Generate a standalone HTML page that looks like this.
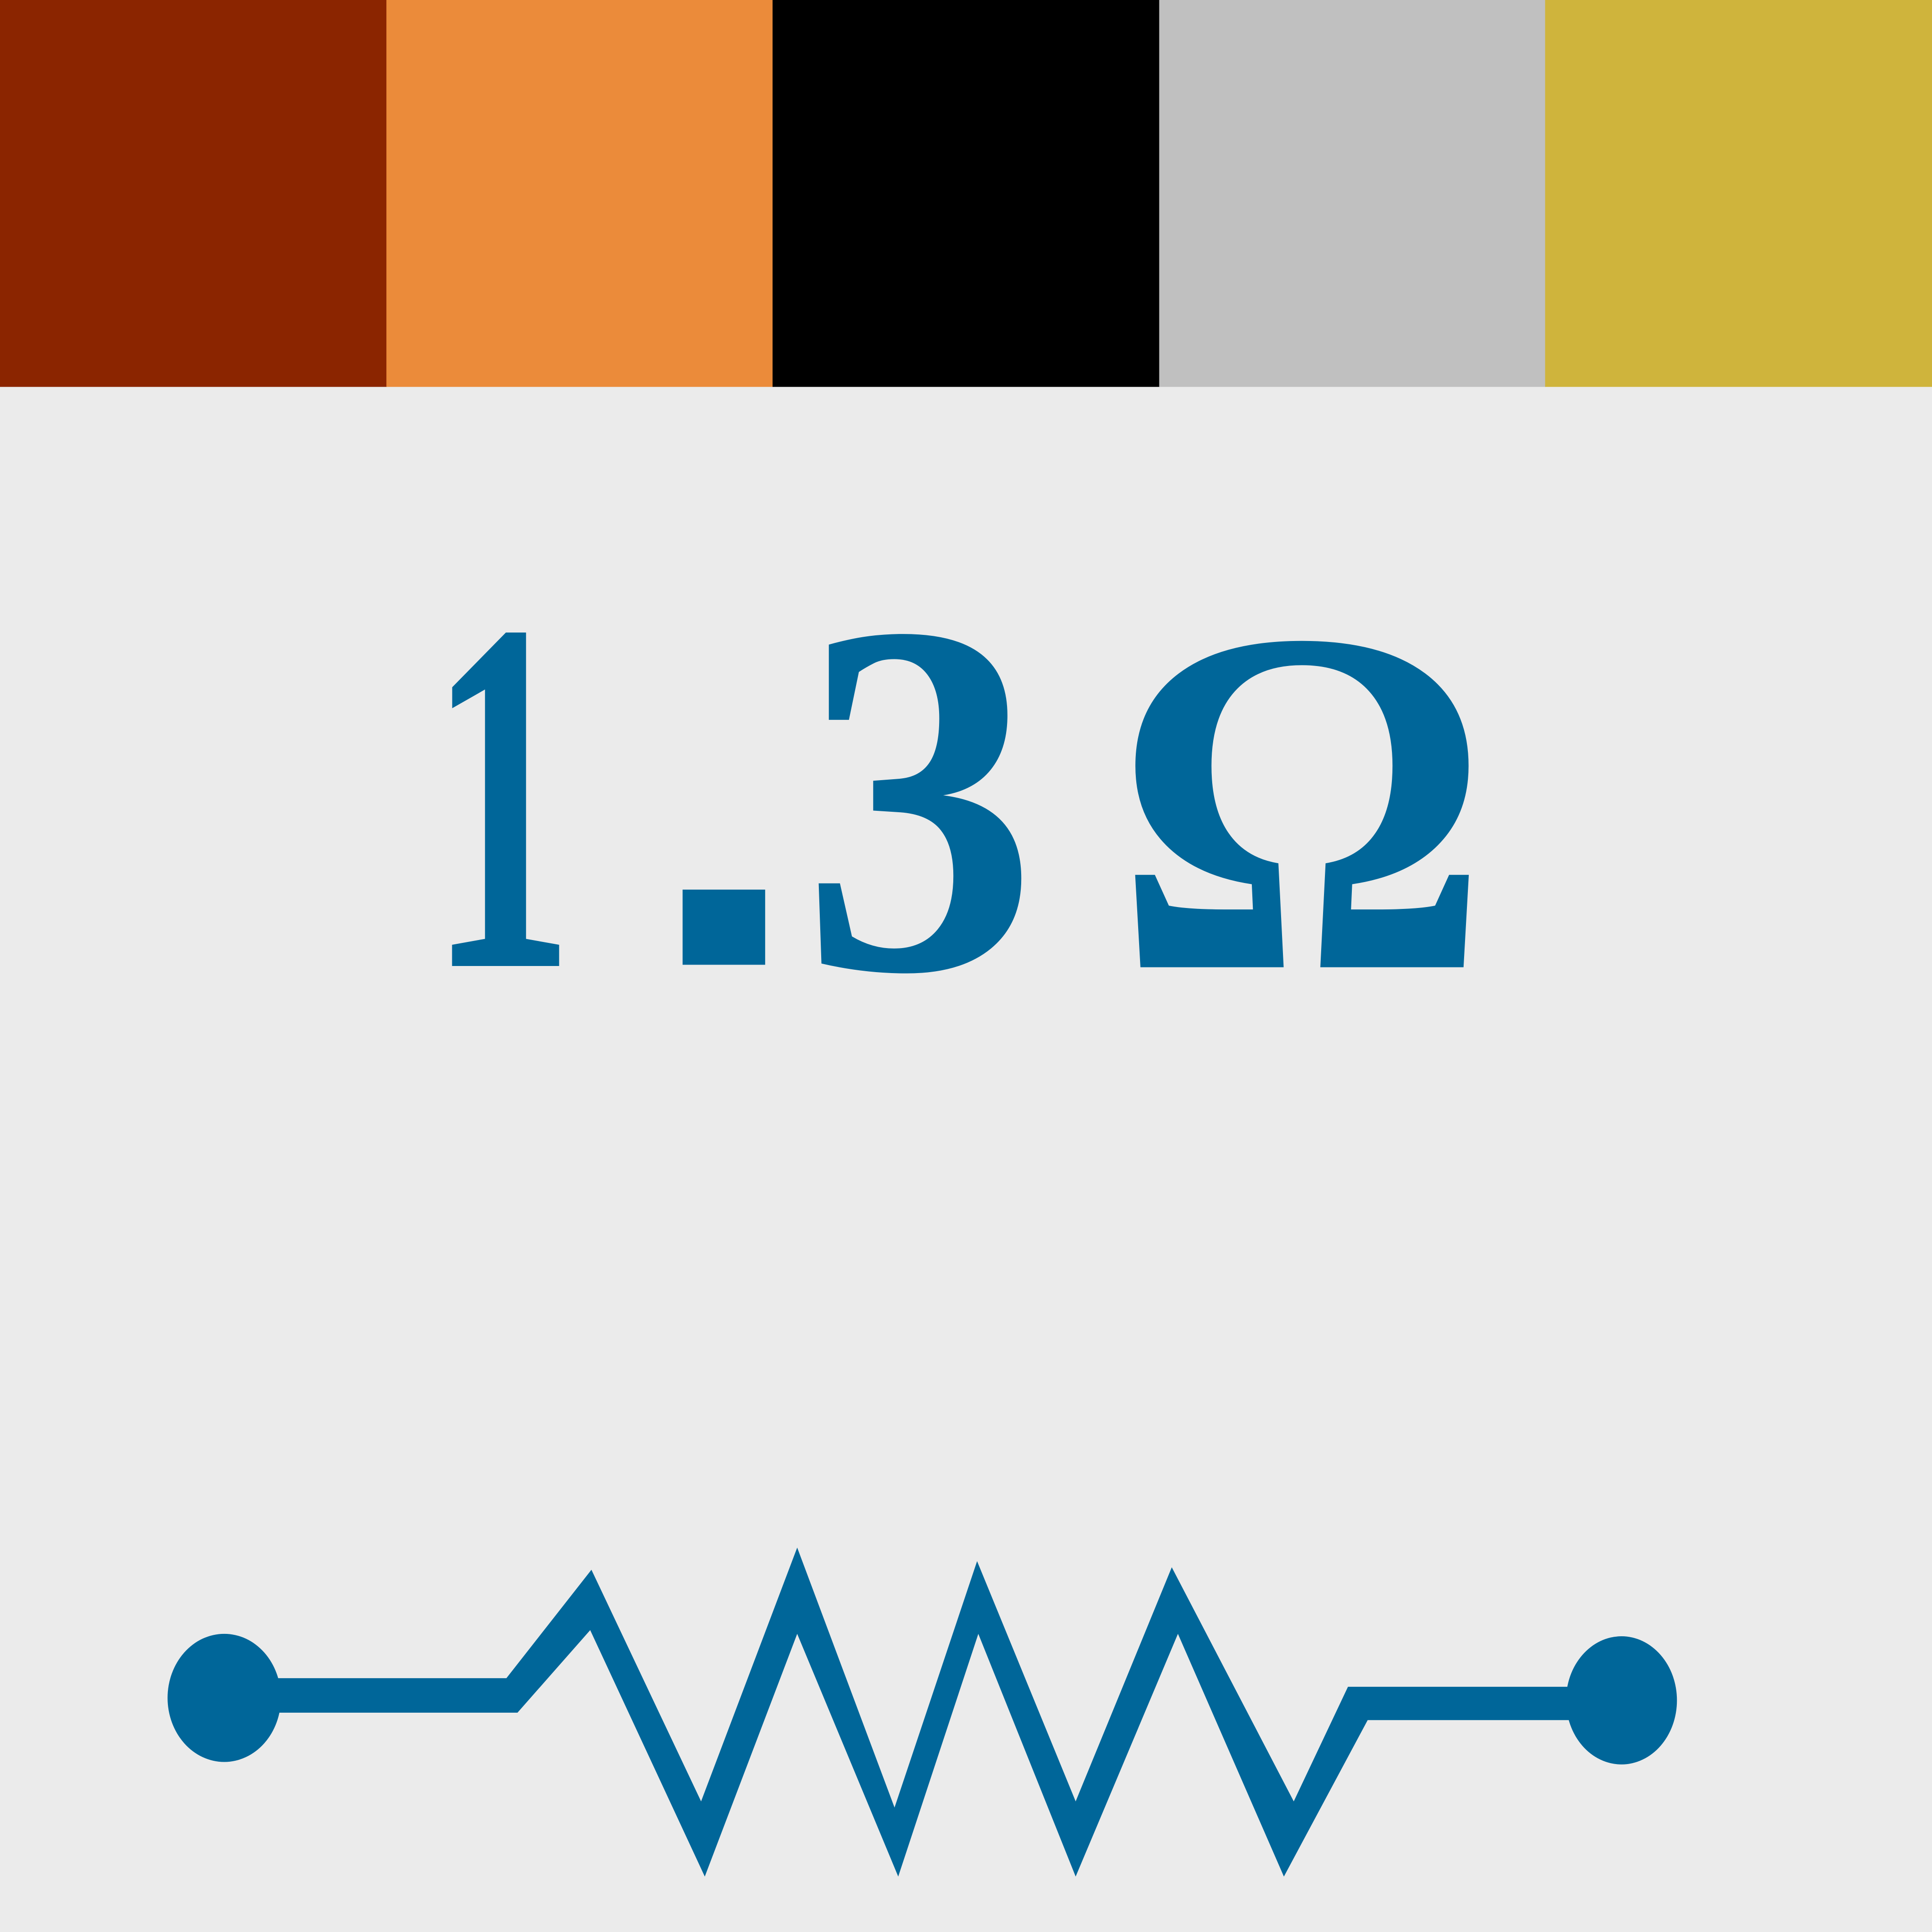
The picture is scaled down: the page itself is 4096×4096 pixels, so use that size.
<!DOCTYPE html>
<html><head><meta charset="utf-8"><style>
html,body{margin:0;padding:0;background:#ebebeb;}
svg{display:block;}
</style></head><body>
<svg width="4096" height="4096" viewBox="0 0 1568 1568" xmlns="http://www.w3.org/2000/svg">
<rect x="0" y="0" width="1568" height="1568" fill="#ebebeb"/>
<rect x="0" y="0" width="314" height="314" fill="#8b2500"/>
<rect x="313.6" y="0" width="314" height="314" fill="#eb8b3a"/>
<rect x="627" y="0" width="314" height="314" fill="#000000"/>
<rect x="940.8" y="0" width="314" height="314" fill="#c0c0c0"/>
<rect x="1254" y="0" width="314" height="314" fill="#cfb43c"/>
<g fill="#006699" font-family="'Liberation Serif', serif" font-weight="bold" font-size="410">
<text x="348" y="784" textLength="118" lengthAdjust="spacingAndGlyphs">1</text>
<rect x="554" y="722" width="67" height="61" fill="#006699"/>
<text x="650" y="786" textLength="192" lengthAdjust="spacingAndGlyphs">3</text>
<text x="904" y="785" textLength="305" lengthAdjust="spacingAndGlyphs" font-size="400">Ω</text>
</g>
<g fill="#006699">
<ellipse cx="182" cy="1378" rx="46" ry="52"/>
<ellipse cx="1316" cy="1380" rx="45" ry="52"/>
<polygon points="220,1362 411,1362 480,1274 569,1462 647,1256 726,1467 793,1267 873,1462 951,1272 1050,1462 1094,1369 1280,1369 1280,1396 1110,1396 1042,1523 956,1326 873,1523 794,1326 729,1523 647,1326 572,1523 479,1323 420,1390 220,1390"/>
</g>
</svg>
</body></html>
